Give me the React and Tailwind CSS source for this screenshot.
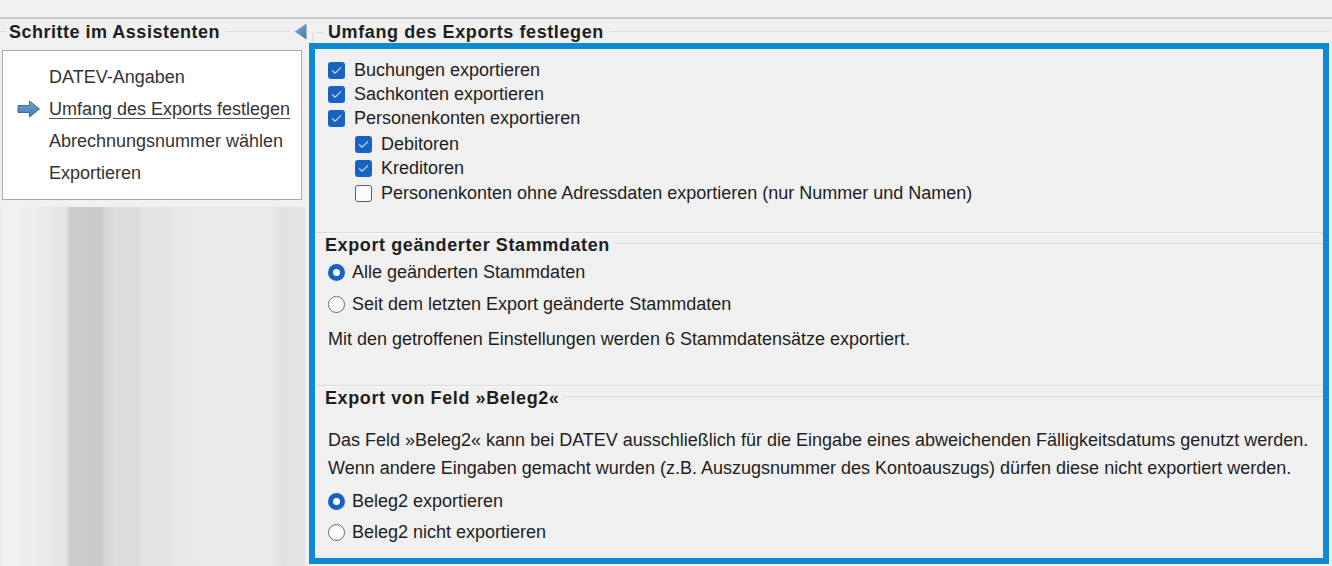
import React from 'react'

const stripes =
  'bg-[linear-gradient(to_right,#e9ebec_0px,#eef0f1_5px,#f0f1f2_17px,#e6e8e9_50px,#e3e5e6_66px,#cbcdce_70px,#c8cacb_100px,#d6d8d9_106px,#dcdee0_116px,#dadcde_138px,#e2e4e6_142px,#e1e3e5_172px,#e7e9ea_175px,#e8eaeb_270px,#e0e2e3_283px,#e2e4e5_305px)]'

function Check({ checked }) {
  if (!checked) {
    return <span className="w-[17px] h-[17px] shrink-0 rounded-[3px] border border-[#5c5c5c] bg-[#fbfbfb]" />
  }
  return (
    <span className="w-[17px] h-[17px] shrink-0 rounded-[3px] bg-[#1862c2] flex items-center justify-center">
      <svg width="11" height="9" viewBox="0 0 11 9" fill="none">
        <path d="M1.5 4.8 L4.2 7.2 L9.5 1.8" stroke="#cfdff2" strokeWidth="1.2" strokeLinecap="round" strokeLinejoin="round" />
      </svg>
    </span>
  )
}

function Radio({ checked }) {
  if (!checked) {
    return <span className="w-[17px] h-[17px] shrink-0 rounded-full border border-[#6a6a6a] bg-[#fbfbfb]" />
  }
  return (
    <span className="w-[17px] h-[17px] shrink-0 rounded-full bg-[#1862c2] flex items-center justify-center">
      <span className="w-[7px] h-[7px] rounded-full bg-white" />
    </span>
  )
}

function CheckRow({ checked, children, className = '' }) {
  return (
    <div className={`h-6 flex items-center gap-[9px] ${className}`}>
      <Check checked={checked} />
      <span>{children}</span>
    </div>
  )
}

function RadioRow({ checked, children, className = '' }) {
  return (
    <div className={`h-6 flex items-center gap-[7px] ${className}`}>
      <Radio checked={checked} />
      <span>{children}</span>
    </div>
  )
}

function SectionHead({ children }) {
  return (
    <div className="flex items-center h-[22px] pl-[10px]">
      <span className="font-bold tracking-[0.6px]">{children}</span>
      <span className="flex-1 h-px bg-[#dcdcdc] ml-[4px] mb-[3px]" />
    </div>
  )
}

function StepArrow() {
  return (
    <svg width="24" height="18" viewBox="0 0 24 18">
      <defs>
        <linearGradient id="arr" x1="0" y1="0" x2="0" y2="1">
          <stop offset="0" stopColor="#7aa8d2" />
          <stop offset="1" stopColor="#3d76ab" />
        </linearGradient>
      </defs>
      <path d="M1 5.5 H12.5 V1 L22.5 9 L12.5 17 V12.5 H1 Z" fill="url(#arr)" stroke="#3a6d9c" strokeWidth="1" strokeLinejoin="round" />
    </svg>
  )
}

function Collapse() {
  return (
    <svg width="13" height="17" viewBox="0 0 13 17">
      <defs>
        <linearGradient id="tri" x1="0" y1="0" x2="1" y2="1">
          <stop offset="0" stopColor="#8db3d8" />
          <stop offset="1" stopColor="#3e74a8" />
        </linearGradient>
      </defs>
      <path d="M12.5 0.5 V16.5 L0.5 8.5 Z" fill="url(#tri)" />
    </svg>
  )
}

export default function App() {
  const steps = [
    { label: 'DATEV-Angaben' },
    { label: 'Umfang des Exports festlegen', active: true },
    { label: 'Abrechnungsnummer wählen' },
    { label: 'Exportieren' },
  ]

  return (
    <div className="w-[1332px] h-[566px] overflow-hidden bg-[#f0f0f0] text-[18px] leading-none text-[#1e1e1e] font-['Liberation_Sans',Arial,sans-serif] flex flex-col">
      {/* window top strip */}
      <div className="h-[19px] shrink-0 border-b-2 border-[#c9c9c9]" />

      <div className="flex flex-1 min-h-0">
        {/* left: wizard steps */}
        <div className="w-[305px] shrink-0 flex flex-col">
          <div className="h-[24px] flex items-center pt-[1px]">
            <span className="w-[6px] h-px bg-[#dcdcdc] mr-[3px]" />
            <span className="font-bold tracking-[0.5px]">Schritte im Assistenten</span>
            <span className="flex-1 h-px bg-[#dcdcdc] ml-[6px] mr-[4px]" />
            <span className="mr-[-2px]"><Collapse /></span>
          </div>
          <div className="mt-[7px] ml-[2px] w-[300px] h-[150px] bg-white border border-[#a9a9a9] pt-[10px] text-[#333]">
            {steps.map((s) => (
              <div key={s.label} className="h-8 flex items-center pl-[14px]">
                <span className="w-[32px] flex items-center">{s.active && <StepArrow />}</span>
                <span className={s.active ? 'underline underline-offset-[3px] decoration-[#555]' : ''}>{s.label}</span>
              </div>
            ))}
          </div>
          <div className={`mt-[7px] flex-1 ${stripes}`} />
        </div>

        {/* right: content */}
        <div className="flex-1 flex flex-col pl-[4px] pr-[3px]">
          <div className="h-[24px] flex items-center pt-[1px]">
            <span className="w-[12px] h-[10px] ml-[3px] mt-[10px] border-l border-t border-[#dcdcdc] rounded-tl-[3px]" />
            <span className="font-bold tracking-[0.6px] ml-[4px]">Umfang des Exports festlegen</span>
            <span className="flex-1 h-px bg-[#dcdcdc] ml-[6px]" />
          </div>

          <div className="h-[521px] border-[6px] border-[#0a8bd3] flex flex-col">
            {/* export scope */}
            <div className="pt-[9px] pl-[13px]">
              <CheckRow checked>Buchungen exportieren</CheckRow>
              <CheckRow checked>Sachkonten exportieren</CheckRow>
              <CheckRow checked>Personenkonten exportieren</CheckRow>
              <div className="pl-[27px] mt-[2px]">
                <CheckRow checked>Debitoren</CheckRow>
                <CheckRow checked>Kreditoren</CheckRow>
                <CheckRow checked={false} className="mt-[1px]">
                  Personenkonten ohne Adressdaten exportieren (nur Nummer und Namen)
                </CheckRow>
              </div>
            </div>

            {/* master data */}
            <div className="mt-[27px] h-px bg-[#dadada]" />
            <div className="h-px bg-[#fafafa]" />
            <SectionHead>Export geänderter Stammdaten</SectionHead>
            <div className="pl-[13px]">
              <RadioRow checked className="mt-[4px]">Alle geänderten Stammdaten</RadioRow>
              <RadioRow checked={false} className="mt-[8px]">Seit dem letzten Export geänderte Stammdaten</RadioRow>
              <div className="h-6 flex items-center mt-[11px]">
                Mit den getroffenen Einstellungen werden 6 Stammdatensätze exportiert.
              </div>
            </div>

            {/* Beleg2 */}
            <div className="mt-[34px] h-px bg-[#dadada]" />
            <div className="h-px bg-[#fafafa]" />
            <SectionHead>Export von Feld »Beleg2«</SectionHead>
            <div className="pl-[13px]">
              <div className="h-6 flex items-center mt-[19px]">
                Das Feld »Beleg2« kann bei DATEV ausschließlich für die Eingabe eines abweichenden Fälligkeitsdatums genutzt werden.
              </div>
              <div className="h-6 flex items-center mt-[4px]">
                Wenn andere Eingaben gemacht wurden (z.B. Auszugsnummer des Kontoauszugs) dürfen diese nicht exportiert werden.
              </div>
              <RadioRow checked className="mt-[9px]">Beleg2 exportieren</RadioRow>
              <RadioRow checked={false} className="mt-[7px]">Beleg2 nicht exportieren</RadioRow>
            </div>
          </div>
        </div>
      </div>
    </div>
  )
}
